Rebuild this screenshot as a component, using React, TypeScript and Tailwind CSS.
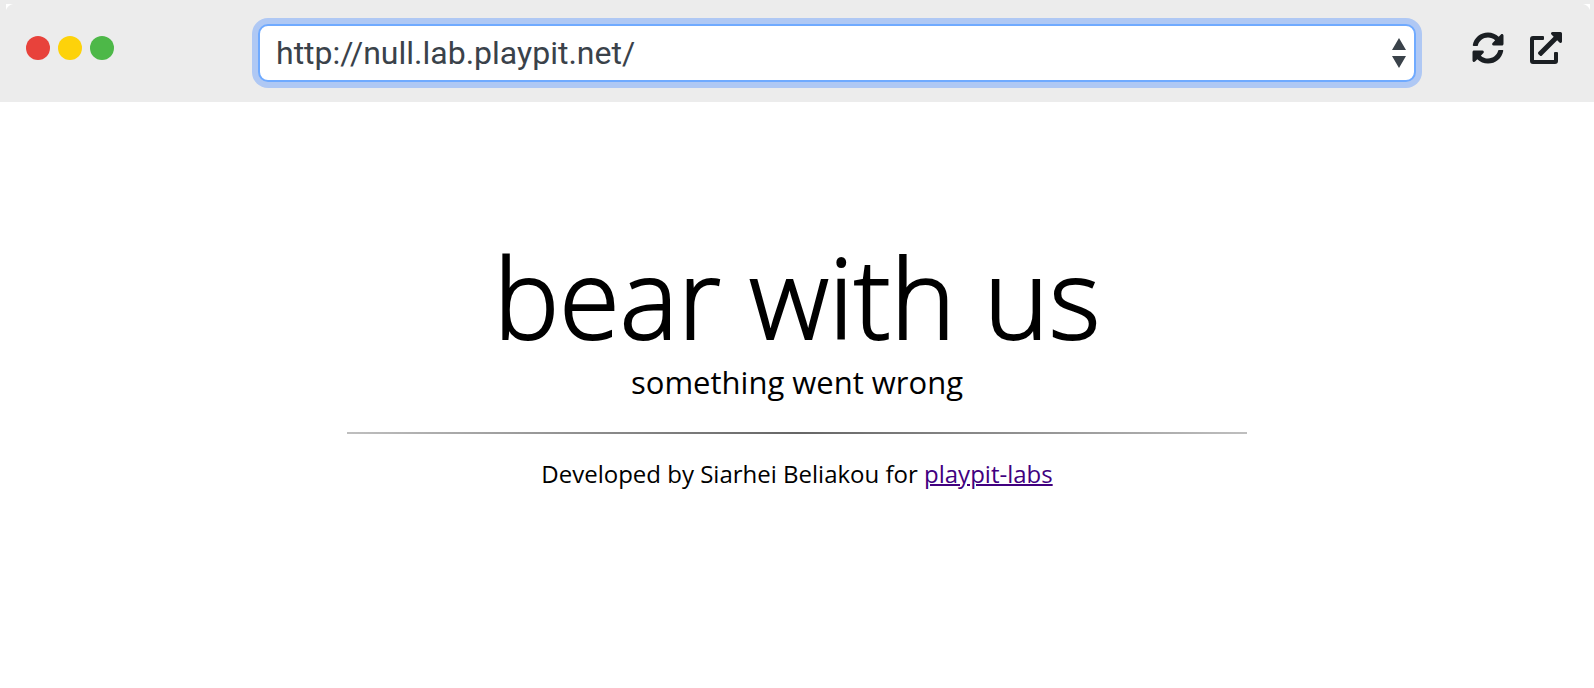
import { FaSyncAlt, FaExternalLinkAlt } from "react-icons/fa";

function WindowCorners() {
  return (
    <>
      <svg viewBox="0 0 7 7" className="absolute top-1 left-1.5 size-[7px] fill-white" aria-hidden="true">
        <path d="M0 0h7Q2 1 0 6z" />
      </svg>
      <svg viewBox="0 0 7 7" className="absolute top-1 right-1 size-[7px] fill-white" aria-hidden="true">
        <path d="M7 0H0Q5 1 7 6z" />
      </svg>
    </>
  );
}

function WindowControls() {
  return (
    <div className="mt-9 flex gap-2" aria-hidden="true">
      <span className="size-6 rounded-full bg-[#e8423b]" />
      <span className="size-6 rounded-full bg-[#fdd20a]" />
      <span className="size-6 rounded-full bg-[#4db848]" />
    </div>
  );
}

function AddressBar() {
  return (
    <div className="relative mt-6 ml-36 flex-1">
      <select
        aria-label="Address"
        className="h-[58px] w-full appearance-none rounded-[10px] border-2 border-[#6faaff] bg-white px-4 font-[Roboto,sans-serif] text-[32px] leading-10 text-[#3a424a] ring-6 ring-[#afc8f4] outline-none"
      >
        <option>http://null.lab.playpit.net/</option>
      </select>
      <svg
        viewBox="0 0 14 30"
        className="pointer-events-none absolute top-3.5 right-2.5 h-[30px] w-3.5 fill-[#3a424a]"
        aria-hidden="true"
      >
        <path d="M7 0l7 12H0zM0 18h14L7 30z" />
      </svg>
    </div>
  );
}

export default function App() {
  return (
    <div className="flex min-h-screen flex-col bg-white font-['Open_Sans',sans-serif] text-black">
      <header className="relative flex h-[102px] items-start bg-[#ececec] pr-8 pl-[26px]">
        <WindowCorners />
        <WindowControls />
        <AddressBar />
        <div className="mt-8 ml-14 flex gap-[26px] text-[#1b1f23]">
          <button aria-label="Reload">
            <FaSyncAlt className="size-8" />
          </button>
          <button aria-label="Open in new tab">
            <FaExternalLinkAlt className="size-8" />
          </button>
        </div>
      </header>
      <main className="flex flex-col items-center pt-[130px]">
        <h1 className="text-[110px] leading-[128px] font-light [-webkit-text-stroke:2px_currentColor]">
          bear with us
        </h1>
        <p className="mt-1 text-[31px] leading-9">something went wrong</p>
        <hr className="mt-8 h-0.5 w-[900px] max-w-full border-0 bg-linear-to-r from-[#bfbfbf] via-[#666] to-[#bfbfbf]" />
        <p className="mt-[22px] text-2xl leading-9">
          Developed by Siarhei Beliakou for{" "}
          <a href="#" className="text-[#410080] underline decoration-2">
            playpit-labs
          </a>
        </p>
      </main>
    </div>
  );
}
